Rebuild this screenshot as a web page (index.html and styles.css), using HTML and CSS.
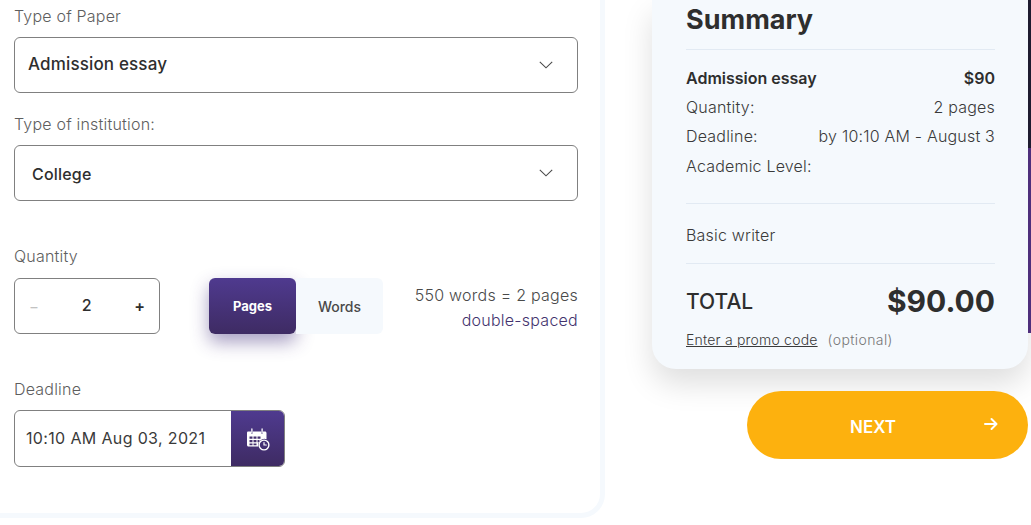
FILE: index.html
```html
<!DOCTYPE html>
<html lang="en">
<head>
<meta charset="utf-8">
<title>Order</title>
<link rel="stylesheet" href="styles.css">
</head>
<body>
<div class="page">
  <main class="form-panel">
    <label class="label label-first">Type of Paper</label>
    <div class="field select">
      <span class="select-value paper">Admission essay</span>
      <svg class="chevron" viewBox="0 0 14 8"><path d="M.8.8 7 6.8 13.2.8"/></svg>
    </div>
    <label class="label label-inst">Type of institution:</label>
    <div class="field select">
      <span class="select-value college">College</span>
      <svg class="chevron" viewBox="0 0 14 8"><path d="M.8.8 7 6.8 13.2.8"/></svg>
    </div>
    <label class="label label-qty">Quantity</label>
    <div class="qty-row">
      <div class="field stepper">
        <span class="minus">−</span>
        <span class="count">2</span>
        <span class="plus">+</span>
      </div>
      <div class="toggle">
        <span class="toggle-btn active">Pages</span>
        <span class="toggle-btn">Words</span>
      </div>
      <div class="spacing-note">
        <div>550 words = 2 pages</div>
        <div class="note-link">double-spaced</div>
      </div>
    </div>
    <label class="label label-deadline">Deadline</label>
    <div class="field deadline">
      <span class="deadline-value">10:10 AM Aug 03, 2021</span>
      <span class="cal-btn">
        <svg class="cal-icon" viewBox="0 0 24 24" fill="none">
          <path fill="#fff" d="M2 4.500h3v1.600c0 .5.4.9.9.9s.9-.4.9-.9V4.500h8.400v1.600c0 .5.4.9.9.9s.9-.4.9-.9V4.500H19c.8 0 1.500.7 1.500 1.500v6.200a6.300 6.300 0 0 0-8.200 7.300H2.500c-.8 0-1.500-.7-1.500-1.500V6c0-.8.400-1.500 1-1.500Z"/>
          <path stroke="#fff" stroke-width="1.300" stroke-linecap="round" d="M5.900 2v4M16.100 2v4"/>
          <path fill="#45306f" d="M3.500 9.500h3v2.300h-3zM7.500 9.500h3v2.300h-3zM11.500 9.500h3v2.300h-3zM3.500 13h3v2.300h-3zM7.500 13h3v2.300h-3zM11.500 13h2v2.300h-2zM3.500 16.500h3v1.700h-3zM7.500 16.500h3v1.700h-3z"/>
          <circle cx="18" cy="18" r="4.900" stroke="#fff" stroke-width="1.400"/>
          <path stroke="#fff" stroke-width="1.200" stroke-linecap="round" d="M18 15.500V18h2.300"/>
        </svg>
      </span>
    </div>
  </main>
  <aside class="side">
    <section class="summary">
      <h2 class="summary-title">Summary</h2>
      <div class="rows">
        <div class="row row-strong"><span>Admission essay</span><span>$90</span></div>
        <div class="row"><span>Quantity:</span><span>2 pages</span></div>
        <div class="row"><span>Deadline:</span><span>by 10:10 AM - August 3</span></div>
        <div class="row row-level"><span>Academic Level:</span></div>
      </div>
      <div class="writer">Basic writer</div>
      <div class="total"><span class="total-label">TOTAL</span><span class="total-value">$90.00</span></div>
      <div class="promo"><a class="promo-link">Enter a promo code</a><span class="optional">(optional)</span></div>
    </section>
    <button class="next">
      <span class="next-text">NEXT</span>
      <svg class="next-arrow" viewBox="0 0 14 14" fill="none"><path d="M1 7h11M7.500 2 12.500 7l-5 5" stroke="#fff" stroke-width="2" stroke-linecap="round" stroke-linejoin="round"/></svg>
    </button>
  </aside>
  <div class="edge"><div class="edge-dark"></div><div class="edge-purple"></div></div>
</div>
</body>
</html>
```
FILE: styles.css
```css
* { box-sizing: border-box; }
html, body { margin: 0; height: 100%; background: #fff; }
body { font-family: "Inter", "Liberation Sans", sans-serif; color: #2e2e2e; overflow: hidden; }
.page { display: flex; width: 1031px; height: 525px; overflow: hidden; position: relative; }

.form-panel {
  width: 605px; height: 518px; flex: none;
  padding: 7px 22px 0 14px;
  border-right: 5px solid #f5f9fd; border-bottom: 5px solid #f5f9fd;
  border-bottom-right-radius: 24px;
}
.label { display: block; font-size: 16px; line-height: 18px; color: #5e5e5e; font-weight: 300; letter-spacing: .2px; }
.label-first { margin-bottom: 12px; }
.label-inst { margin: 22px 0 12px; }
.label-qty { margin: 46px 0 13px; }
.label-deadline { margin: 46px 0 12px; }
.field { border: 1px solid #808080; border-radius: 6px; background: #fff; }
.select { display: flex; align-items: center; justify-content: space-between; height: 56px; padding-right: 24px; }
.select-value { font-size: 17px; font-weight: 500; color: #2e2e2e; letter-spacing: .15px; }
.paper { padding-left: 13px; margin-top: -2px; }
.college { padding-left: 17px; font-size: 16px; letter-spacing: .2px; margin-top: 1px; }
.chevron { width: 14px; height: 8px; fill: none; stroke: #4a4a4a; stroke-width: 1.100; }

.qty-row { display: flex; align-items: flex-start; height: 56px; }
.stepper { width: 146px; height: 56px; display: flex; align-items: center; justify-content: space-between; padding: 0 14px; }
.minus { color: #c2c2c2; font-size: 15px; }
.count { font-size: 16px; font-weight: 500; margin-top: -2px; }
.plus { font-size: 16px; font-weight: 600; }
.toggle { display: flex; margin-left: 49px; height: 56px; }
.toggle-btn {
  width: 87px; display: flex; align-items: center; justify-content: center;
  font-size: 14px; font-weight: 500; color: #4a4a4a; background: #f5f9fd;
  border-radius: 0 6px 6px 0;
}
.toggle-btn.active {
  color: #fff; font-size: 13px; font-weight: 700; border-radius: 6px;
  background: linear-gradient(#4f3a8f, #3e2b63);
  box-shadow: 0 8px 18px rgba(60, 40, 120, .45);
}
.spacing-note { flex: 1; text-align: right; font-size: 16px; font-weight: 300; letter-spacing: .25px; line-height: 25px; color: #4a4a4a; margin-top: 5px; }
.note-link { color: #43336e; }

.deadline { width: 271px; height: 57px; display: flex; align-items: center; justify-content: space-between; overflow: hidden; padding-left: 11px; }
.deadline-value { font-size: 16px; font-weight: 400; letter-spacing: .35px; color: #3a3a3a; margin-top: -2px; }
.cal-btn { width: 53px; height: 100%; display: flex; align-items: center; justify-content: center; background: linear-gradient(#4f3a8f, #3e2b63); }
.cal-icon { width: 24px; height: 24px; }

.side { width: 376px; margin-left: 47px; flex: none; display: flex; flex-direction: column; align-items: flex-end; }
.summary {
  width: 376px; height: 369px; padding: 0 33px 0 34px;
  background: #f5f9fd; border-radius: 0 0 24px 24px;
  box-shadow: 0 15px 30px rgba(0, 0, 0, .13);
}
.summary-title { margin: 0; height: 50px; padding-top: 4px; font-size: 27px; line-height: 32px; font-weight: 700; color: #2e2e2e; border-bottom: 1px solid #e2eaf3; }
.rows { height: 154px; padding-top: 14px; border-bottom: 1px solid #e2eaf3; font-size: 16px; font-weight: 300; letter-spacing: .2px; color: #3a3a3a; }
.row { display: flex; justify-content: space-between; height: 29px; line-height: 29px; }
.row-strong { font-weight: 600; color: #2e2e2e; letter-spacing: 0; }
.row-level { height: 30px; line-height: 29px; padding-top: 1px; }
.writer { height: 60px; line-height: 62px; font-size: 16px; font-weight: 300; letter-spacing: .2px; color: #3a3a3a; border-bottom: 1px solid #e2eaf3; }
.total { display: flex; justify-content: space-between; align-items: center; height: 74px; }
.total-label { font-size: 21px; font-weight: 500; color: #2e2e2e; }
.total-value { font-size: 30px; font-weight: 700; color: #2e2e2e; }
.promo { font-size: 14px; line-height: 16px; margin-top: -6px; font-weight: 300; letter-spacing: .2px; }
.promo-link { color: #3a3a3a; text-decoration: underline; }
.optional { color: #777; margin-left: 10px; letter-spacing: .4px; }

.next {
  width: 281px; height: 68px; margin-top: 22px; border: 0; border-radius: 34px;
  background: #fdb10e; color: #fff; font-family: inherit; font-size: 17px; font-weight: 600;
  display: flex; align-items: center; padding: 0 30px 0 103px; justify-content: space-between;
}
.next-text { line-height: 20px; margin-top: 3px; }
.next-arrow { width: 14px; height: 14px; margin-top: -3px; }

.edge { position: absolute; top: 0; right: 0; width: 3px; height: 333px; display: flex; flex-direction: column; }
.edge-dark { height: 148px; background: #1e1c30; }
.edge-purple { flex: 1; background: #4e2f7c; }
```
